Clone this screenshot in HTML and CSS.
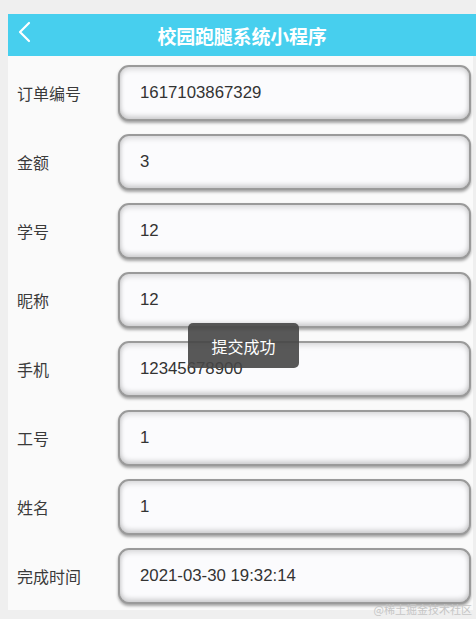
FILE: index.html
```html
<!DOCTYPE html>
<html lang="zh">
<head>
<meta charset="utf-8">
<title>校园跑腿系统小程序</title>
<link rel="stylesheet" href="styles.css">
</head>
<body>
<div class="app">
  <header class="topbar">
    <svg class="back" width="14" height="22" viewBox="0 0 14 22"><path d="M12 2 L3 11 L12 20" fill="none" stroke="#ffffff" stroke-width="2.2" stroke-linecap="round" stroke-linejoin="round"/></svg>
    <h1 class="title">校园跑腿系统小程序</h1>
  </header>
  <main class="form">
    <div class="row"><span class="label">订单编号</span><div class="field">1617103867329</div></div>
    <div class="row"><span class="label">金额</span><div class="field">3</div></div>
    <div class="row"><span class="label">学号</span><div class="field">12</div></div>
    <div class="row"><span class="label">昵称</span><div class="field">12</div></div>
    <div class="row"><span class="label">手机</span><div class="field">12345678900</div></div>
    <div class="row"><span class="label">工号</span><div class="field">1</div></div>
    <div class="row"><span class="label">姓名</span><div class="field">1</div></div>
    <div class="row"><span class="label">完成时间</span><div class="field">2021-03-30 19:32:14</div></div>
  </main>
  <div class="toast">提交成功</div>
</div>
<div class="watermark">@稀土掘金技术社区</div>
</body>
</html>
```
FILE: styles.css
```css
html, body {
  margin: 0;
  padding: 0;
}
body {
  background: #efefef;
  width: 476px;
  height: 619px;
  position: relative;
  overflow: hidden;
  font-family: "Liberation Sans", "Noto Sans CJK SC", sans-serif;
}
.app {
  position: relative;
  margin: 14px 0 0 8px;
  width: 468px;
}
.topbar {
  height: 42px;
  background: #47cfee;
  display: flex;
  align-items: center;
  justify-content: center;
  position: relative;
}
.back {
  position: absolute;
  left: 9px;
  top: 7px;
}
.title {
  margin: 0;
  color: #ffffff;
  font-family: "Noto Sans CJK SC", sans-serif;
  font-size: 19px;
  font-weight: 700;
  letter-spacing: -0.2px;
}
.form {
  width: 465px;
  background: #fafafa;
  padding: 9px 0 6px 0;
  display: flex;
  flex-direction: column;
  gap: 13px;
  box-sizing: border-box;
}
.row {
  display: flex;
  align-items: center;
  height: 56px;
}
.label {
  width: 110px;
  padding-left: 9px;
  box-sizing: border-box;
  font-family: "Noto Sans CJK SC", sans-serif;
  font-size: 16px;
  color: #3a3a3a;
}
.field {
  width: 353px;
  height: 56px;
  box-sizing: border-box;
  border: 2px solid #9a9a9a;
  border-radius: 11px;
  background: #fbfbfd;
  box-shadow: 0 2px 3px rgba(0, 0, 0, 0.35), inset 0 3px 5px rgba(0, 0, 0, 0.12), inset 0 -3px 5px rgba(0, 0, 0, 0.18);
  display: flex;
  align-items: center;
  padding-left: 20px;
  font-size: 16.8px;
  color: #333333;
}
.toast {
  position: absolute;
  left: 180px;
  top: 309px;
  width: 111px;
  height: 45px;
  border-radius: 5px;
  background: rgba(70, 70, 70, 0.9);
  color: #ffffff;
  font-family: "Noto Sans CJK SC", sans-serif;
  font-size: 16px;
  display: flex;
  align-items: center;
  justify-content: center;
}
.watermark {
  position: absolute;
  right: 4px;
  bottom: 2px;
  font-family: "Noto Sans CJK SC", sans-serif;
  font-size: 11px;
  color: #c6c6c6;
}
```
